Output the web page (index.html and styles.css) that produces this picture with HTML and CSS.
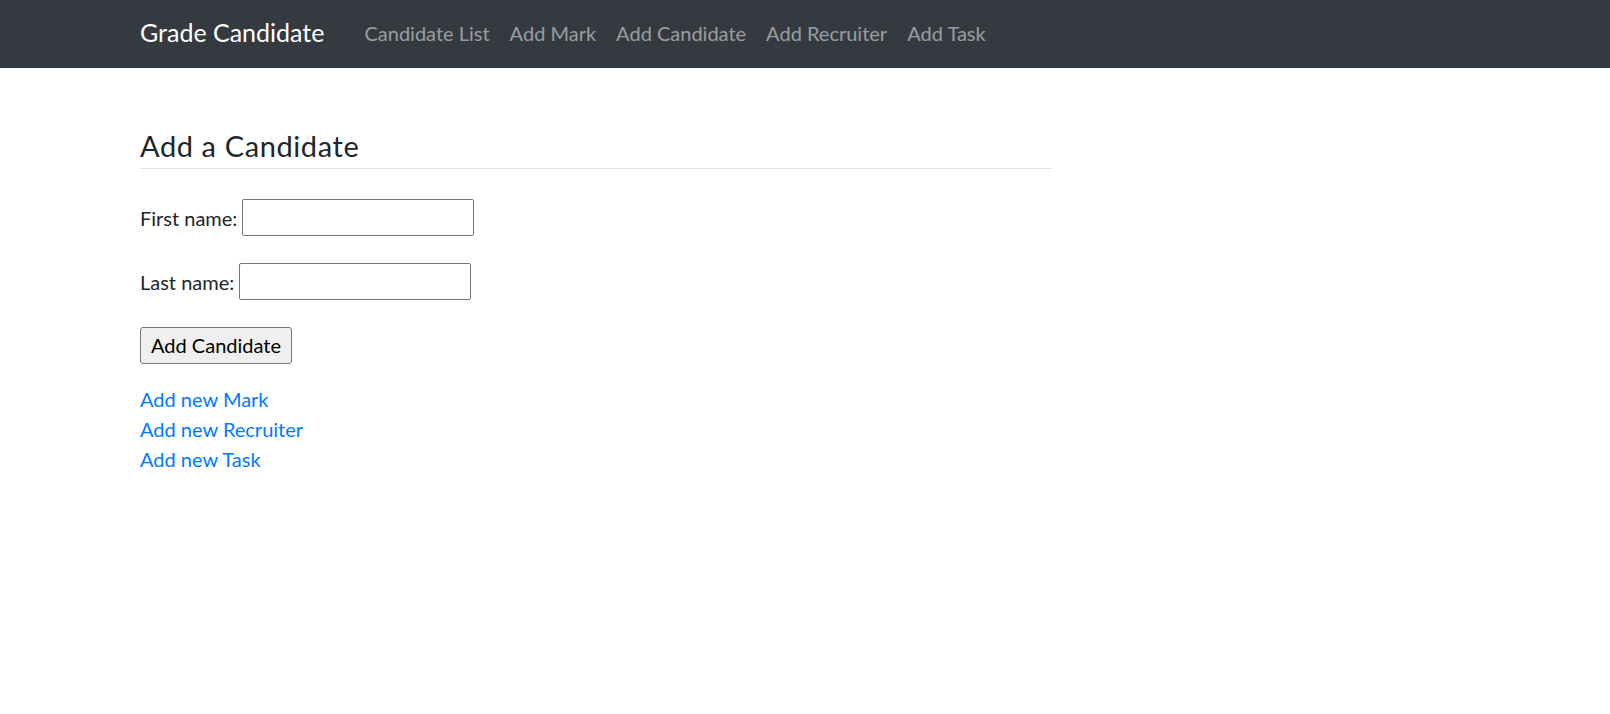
FILE: index.html
```html
<!DOCTYPE html>
<html lang="en">
<head>
<meta charset="utf-8">
<title>Add a Candidate</title>
<link rel="stylesheet" href="styles.css">
</head>
<body>
<nav class="navbar">
  <a class="brand" href="#">Grade Candidate</a>
  <ul class="nav">
    <li><a class="nav-link" href="#">Candidate List</a></li>
    <li><a class="nav-link" href="#">Add Mark</a></li>
    <li><a class="nav-link" href="#">Add Candidate</a></li>
    <li><a class="nav-link" href="#">Add Recruiter</a></li>
    <li><a class="nav-link" href="#">Add Task</a></li>
  </ul>
</nav>
<main class="content">
  <h4 class="page-title">Add a Candidate</h4>
  <form class="form">
    <div class="row">
      <label class="label" for="first">First name:</label>
      <input class="text-input" type="text" id="first">
    </div>
    <div class="row">
      <label class="label" for="last">Last name:</label>
      <input class="text-input" type="text" id="last">
    </div>
    <button class="btn" type="button">Add Candidate</button>
  </form>
  <div class="links">
    <a class="link" href="#">Add new Mark</a>
    <a class="link" href="#">Add new Recruiter</a>
    <a class="link" href="#">Add new Task</a>
  </div>
</main>
</body>
</html>
```
FILE: styles.css
```css
* { box-sizing: border-box; }
html, body { margin: 0; padding: 0; }
body {
  font-family: Lato, "Open Sans", sans-serif;
  font-size: 20px;
  line-height: 1.5;
  color: #212529;
  background: #fff;
}
.navbar {
  height: 68px;
  background: #343a40;
  display: flex;
  align-items: center;
  padding: 0 140px 2px;
}
.brand {
  font-size: 25px;
  line-height: 37.5px;
  color: #fff;
  text-decoration: none;
  margin-right: 30px;
}
.nav {
  display: flex;
  list-style: none;
  margin: 0;
  padding: 0;
}
.nav-link {
  display: block;
  padding: 0 10px;
  line-height: 30px;
  color: rgba(255, 255, 255, 0.5);
  text-decoration: none;
}
.content {
  padding: 61px 140px 0;
}
.page-title {
  margin: 0;
  width: 912px;
  font-size: 29px;
  font-weight: 400;
  letter-spacing: 0.6px;
  line-height: 1.2;
  padding-bottom: 4px;
  border-bottom: 1px solid #dee2e6;
}
.form {
  margin-top: 30px;
}
.row {
  display: flex;
  align-items: center;
  gap: 5px;
  height: 37px;
  margin-bottom: 27px;
}
.label {
  line-height: 30px;
  padding-top: 1px;
}
.text-input {
  width: 232px;
  height: 37px;
  border: 1px solid #767676;
  border-radius: 2px;
  font-size: 17px;
  padding: 1px 3px;
  background: #fff;
}
.btn {
  display: block;
  width: 152px;
  height: 37px;
  padding: 0;
  font-family: Lato, "Open Sans", sans-serif;
  font-size: 20px;
  color: #000;
  background: #efefef;
  border: 1px solid #767676;
  border-radius: 3px;
}
.links {
  margin-top: 20px;
  display: flex;
  flex-direction: column;
  align-items: flex-start;
}
.link {
  color: #007bff;
  text-decoration: none;
  line-height: 30px;
}
```
